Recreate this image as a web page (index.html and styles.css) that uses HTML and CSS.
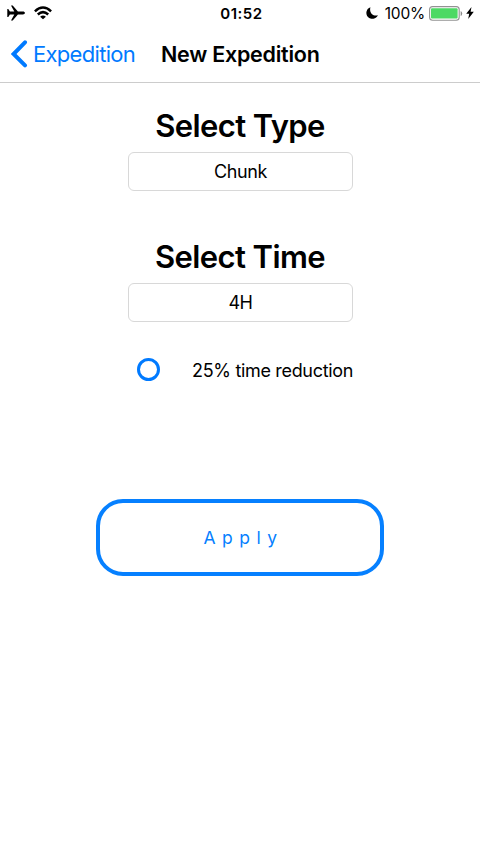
FILE: index.html
```html
<!DOCTYPE html>
<html lang="en"><head><meta charset="utf-8"><title>New Expedition</title><link rel="stylesheet" href="styles.css"></head>
<body>
<div class="status">
<div class="status-left">
<svg width="18" height="16" viewBox="0 0 18 16"><path d="M.3 4h1L2.9 6.6h4.4L4 .6h1.7l5.2 6h5c1.2 0 2 .6 2 1.4s-.8 1.4-2 1.4h-5l-5.2 6H4l3.3-6H2.9L1.3 12h-1z"/></svg>
<svg width="18" height="14" viewBox="0 0 18 14"><g fill="none" stroke="#000" stroke-width="2.5"><path d="M.9 5.3Q9-2.2 17.1 5.3"/><path d="M3.8 8.5Q9 3.8 14.2 8.5"/></g><path d="M6.1 10.7Q9 8.3 11.9 10.7L9 13.3z"/></svg>
</div>
<div class="clock">01:52</div>
<div class="status-right">
<svg class="moon" width="12" height="12" viewBox="0 0 12 12"><path d="M4.4.2A6 6 0 1 0 11.9 8.2C8 9.8 2.8 6.5 4.4.2z"/></svg>
<span class="pct">100%</span>
<svg class="battery" width="34" height="15" viewBox="0 0 34 15"><rect x=".6" y=".6" width="29.6" height="13.6" rx="3" fill="none" stroke="#929292" stroke-width="1.1"/><rect x="2" y="2.2" width="26.6" height="10.4" rx="1" fill="#4cd964"/><path d="M31.7 5q1.5.5 1.5 2.5t-1.5 2.5z" fill="#8a8a8a"/></svg>
<svg class="bolt" width="8" height="12" viewBox="0 0 8 12"><path d="M5.5 0L.2 6.8h3L2.2 12 7.8 4.8H4.6z"/></svg>
</div>
</div>
<header class="nav"><a class="back"><svg width="17" height="28" viewBox="0 0 17 28"><path d="M14 2.3L2.6 14 14 25.3" fill="none" stroke="#007aff" stroke-width="4" stroke-linecap="round"/></svg><span>Expedition</span></a><h1>New Expedition</h1></header>
<main>
<h2>Select Type</h2><div class="field">Chunk</div>
<h2 class="second">Select Time</h2><div class="field">4H</div>
<label class="option"><span class="ring"></span><span>25% time reduction</span></label>
<button>Apply</button>
</main>
</body></html>
```
FILE: styles.css
```css
* { box-sizing: border-box; }
body { margin: 0; height: 854px; background: #fff; color: #000; font-family: Inter, sans-serif; overflow: hidden; }
svg { display: block; flex: none; }
.status { display: grid; grid-template-columns: 1fr auto 1fr; height: 26px; align-items: center; padding: 0 6px 0 7px; }
.status-left, .status-right { display: flex; align-items: center; }
.status-left { gap: 9px; padding-bottom: 1px; }
.status-right { justify-content: flex-end; }
.clock { font-size: 15px; font-weight: 600; letter-spacing: .5px; padding-left: 2px; }
.pct { font-size: 15.5px; margin: 0 4px 0 7px; letter-spacing: -.2px; }
.bolt { margin-left: 3px; }
.nav { display: flex; height: 57px; align-items: center; border-bottom: 1px solid #ccc; padding-left: 11px; }
.back { display: flex; align-items: center; gap: 5px; width: 150px; color: #007aff; font-size: 22px; letter-spacing: -.7px; }
.back svg { margin-top: -1px; }
h1 { margin: 0; font-size: 21.5px; font-weight: 600; letter-spacing: -.25px; white-space: nowrap; }
main { display: flex; flex-direction: column; align-items: center; padding-top: 24px; }
h2 { margin: 0 0 7px; font-size: 31px; line-height: 38px; font-weight: 600; letter-spacing: -.6px; white-space: nowrap; }
.field { width: 225px; height: 39px; margin-left: 1px; border: 1px solid #d8d8d8; border-radius: 6px; display: flex; align-items: center; justify-content: center; font-size: 18px; letter-spacing: -.4px; }
.second { margin-top: 47px; }
.option { width: 216px; display: flex; align-items: center; justify-content: space-between; margin: 36px 0 0 10px; font-size: 18px; letter-spacing: -.33px; height: 24px; white-space: nowrap; }
.ring { width: 23px; height: 23px; margin-bottom: 1px; border: 3px solid #007aff; border-radius: 50%; }
button { width: 288px; height: 77px; margin-top: 117px; padding: 0 0 0 7px; border: 4px solid #0680ff; border-radius: 27px; background: #fff; color: #0680ff; font: 17.5px Inter, sans-serif; letter-spacing: 6.5px; }
```
